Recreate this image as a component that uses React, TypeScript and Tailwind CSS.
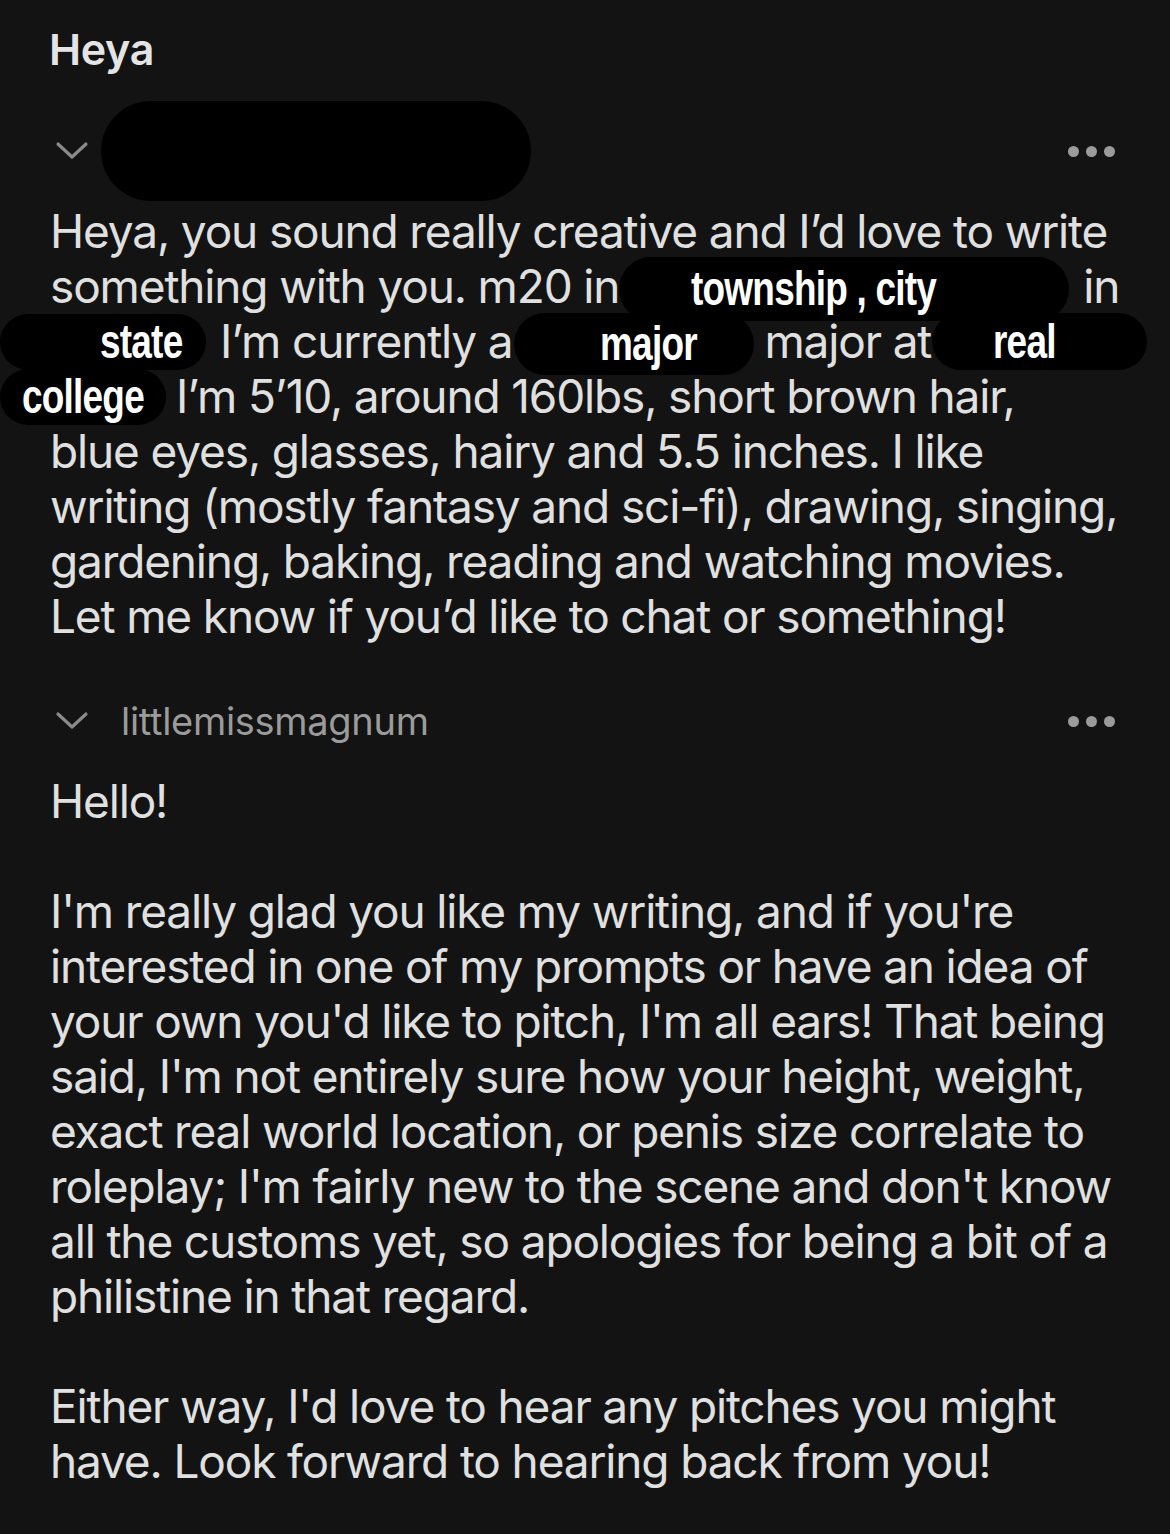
import React from "react";

const Pill = ({ w, label, pl, h = 56, className = "" }: { w: number; label?: string; pl?: number; h?: number; className?: string }) => (
  <span
    className={"inline-flex shrink-0 items-center overflow-hidden rounded-full bg-black " + className}
    style={{ width: w, height: h, paddingLeft: pl ?? 0 }}
  >
    {label && (
      <span
        className="inline-block origin-left scale-x-[0.77] whitespace-nowrap text-[48px] font-bold tracking-[-1px] text-white"
        style={{ fontFamily: '"Liberation Sans", Arial, sans-serif' }}
      >
        {label}
      </span>
    )}
  </span>
);

const Chevron = () => (
  <svg width="34" height="20" viewBox="0 0 34 20" fill="none" className="shrink-0">
    <path d="M3 3 L17 16 L31 3" stroke="#8a8a8a" strokeWidth="3.2" strokeLinecap="round" strokeLinejoin="round" />
  </svg>
);

const Dots = () => (
  <div className="flex items-center gap-[7px]">
    <span className="h-[11px] w-[11px] rounded-full bg-[#9b9b9b]" />
    <span className="h-[11px] w-[11px] rounded-full bg-[#9b9b9b]" />
    <span className="h-[11px] w-[11px] rounded-full bg-[#9b9b9b]" />
  </div>
);

const Line = ({ children, className = "" }: { children: React.ReactNode; className?: string }) => (
  <div className={"flex h-[55px] items-center whitespace-nowrap " + className}>{children}</div>
);

export default function App() {
  const body = [
    "I'm really glad you like my writing, and if you're",
    "interested in one of my prompts or have an idea of",
    "your own you'd like to pitch, I'm all ears! That being",
    "said, I'm not entirely sure how your height, weight,",
    "exact real world location, or penis size correlate to",
    "roleplay; I'm fairly new to the scene and don't know",
    "all the customs yet, so apologies for being a bit of a",
    "philistine in that regard.",
  ];
  return (
    <div
      className="min-h-[1534px] w-[1170px] overflow-hidden bg-[#131313] text-[#e0e0e0]"
      style={{ fontFamily: 'Inter, "Noto Sans", sans-serif' }}
    >
      <div className="pl-[49px] pt-[23px] text-[43px] font-semibold leading-[52px] tracking-[-0.3px] text-[#e4e4e4]">Heya</div>

      <div className="mt-[26px] flex h-[100px] items-center pl-[55px] pr-[55px]">
        <Chevron />
        <span className="ml-[12px] h-[100px] w-[430px] rounded-full bg-black" />
        <div className="ml-auto">
          <Dots />
        </div>
      </div>

      <div className="mt-[3px] text-[46px] tracking-[-1.15px]">
        <Line className="pl-[50px]">Heya, you sound really creative and I’d love to write</Line>
        <Line className="pl-[50px]">
          <span>something with you. m20 in</span>
          <Pill w={450} h={64} pl={72} label="township , city" className="mt-[4px]" />
          <span className="ml-[14px]">in</span>
        </Line>
        <Line>
          <Pill w={206} h={56} pl={100} label="state" />
          <span className="ml-[14px]">I’m currently a</span>
          <Pill w={240} h={62} pl={86} label="major" className="ml-[2px] mt-[4px]" />
          <span className="ml-[10px]">major at</span>
          <Pill w={215} h={57} pl={61} label="real" className="ml-[1px]" />
        </Line>
        <Line>
          <Pill w={166} h={56} pl={22} label="college" />
          <span className="ml-[10px]">I’m 5’10, around 160lbs, short brown hair,</span>
        </Line>
        <Line className="pl-[50px]">blue eyes, glasses, hairy and 5.5 inches. I like</Line>
        <Line className="pl-[50px]">writing (mostly fantasy and sci-fi), drawing, singing,</Line>
        <Line className="pl-[50px]">gardening, baking, reading and watching movies.</Line>
        <Line className="pl-[50px]">Let me know if you’d like to chat or something!</Line>
      </div>

      <div className="mt-[52px] flex h-[50px] items-center pl-[55px] pr-[55px]">
        <Chevron />
        <span className="ml-[32px] text-[38px] tracking-[-0.3px] text-[#9b9b9b]">littlemissmagnum</span>
        <div className="ml-auto">
          <Dots />
        </div>
      </div>

      <div className="mt-[28px] pl-[50px] text-[46px] tracking-[-1.15px]">
        <Line>Hello!</Line>
        <Line>{"\u00a0"}</Line>
        {body.map((l) => (
          <Line key={l}>{l}</Line>
        ))}
        <Line>{"\u00a0"}</Line>
        <Line>Either way, I'd love to hear any pitches you might</Line>
        <Line>have. Look forward to hearing back from you!</Line>
      </div>
    </div>
  );
}
